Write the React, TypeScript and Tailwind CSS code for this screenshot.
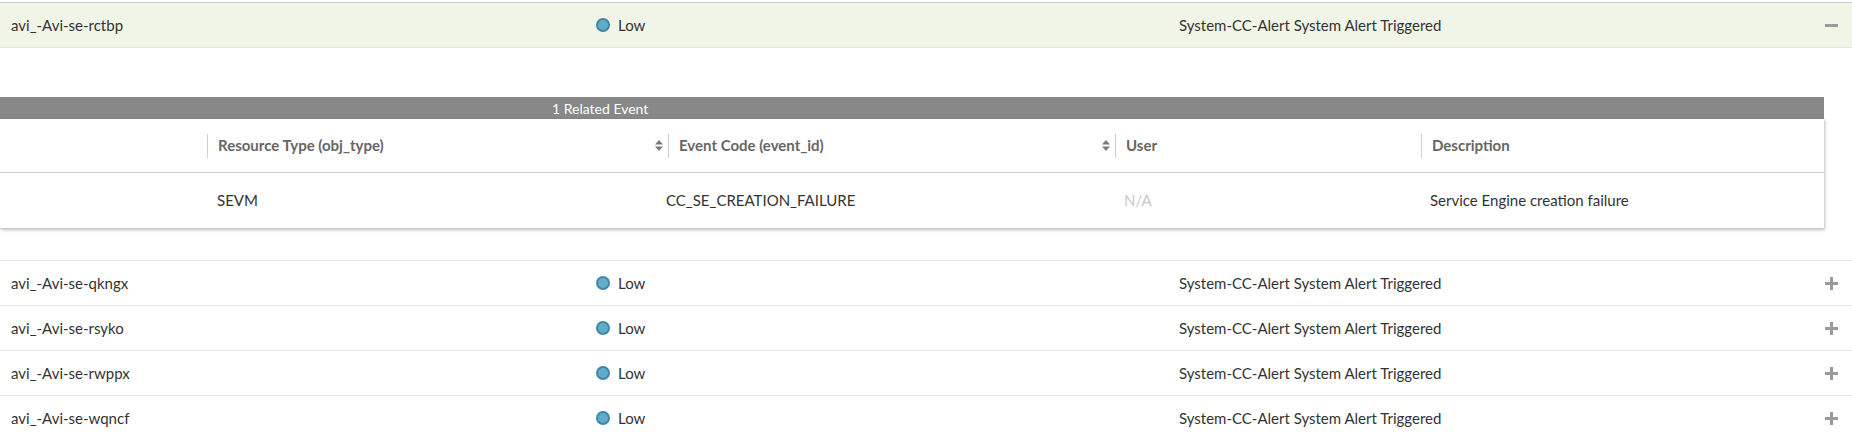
import React from 'react';

const rows = [
  { name: 'avi_-Avi-se-qkngx' },
  { name: 'avi_-Avi-se-rsyko' },
  { name: 'avi_-Avi-se-rwppx' },
  { name: 'avi_-Avi-se-wqncf' },
];

function SortIcon() {
  return (
    <svg width="8" height="11" viewBox="0 0 8 11" className="shrink-0">
      <path d="M4 0 L8 4.5 L0 4.5 Z" fill="#7a7a7a" />
      <path d="M0 6.5 L8 6.5 L4 11 Z" fill="#7a7a7a" />
    </svg>
  );
}

function ToggleIcon({ open }: { open?: boolean }) {
  return (
    <svg width="13" height="13" viewBox="0 0 13 13">
      <rect x="0" y="5" width="13" height="3" fill="#9a9a9a" />
      {!open && <rect x="5" y="0" width="3" height="13" fill="#9a9a9a" />}
    </svg>
  );
}

function Severity() {
  return (
    <div className="flex items-center gap-[8px]">
      <span className="w-[14px] h-[14px] rounded-full bg-[#62abc9] border-2 border-[#3f87a6]" />
      <span>Low</span>
    </div>
  );
}

function AlertRow({ name, expanded }: { name: string; expanded?: boolean }) {
  return (
    <div
      className={`flex items-center h-[45px] border-b border-[#e6e6e6] ${
        expanded ? 'h-[46px] bg-[#f1f5e8] border-t border-t-[#cccccc]' : 'bg-white'
      }`}
    >
      <div className="w-[596px] pl-[11px]">{name}</div>
      <div className="w-[583px]">
        <Severity />
      </div>
      <div className="flex-1">System-CC-Alert System Alert Triggered</div>
      <div className="w-[13px] mr-[14px] flex items-center">
        <ToggleIcon open={expanded} />
      </div>
    </div>
  );
}

function HeaderCell({ label, sortable }: { label: string; sortable?: boolean }) {
  return (
    <div className="flex items-center h-full">
      <div className="w-px h-[24px] bg-[#cfcfcf]" />
      <div className="flex-1 pl-[10px] font-bold text-[#666]">{label}</div>
      {sortable && (
        <div className="pr-[5px]">
          <SortIcon />
        </div>
      )}
    </div>
  );
}

export default function App() {
  return (
    <div className="w-[1852px] h-[437px] overflow-hidden bg-white text-[15px] text-[#333] font-['Lato',sans-serif] pt-[2px]">
      <AlertRow name="avi_-Avi-se-rctbp" expanded />

      {/* expanded details */}
      <div className="pt-[49px] pb-[31px] pr-[28px]">
        <div className="h-[22px] bg-[#888888] text-white text-[14px] flex items-center pl-[552px]">
          1 Related Event
        </div>
        <div className="bg-white shadow-[1px_1px_3px_rgba(0,0,0,0.25)] border-b border-[#cccccc]">
          <div className="grid grid-cols-[207px_461px_447px_306px_1fr] h-[54px] border-b border-[#cccccc]">
            <div />
            <HeaderCell label="Resource Type (obj_type)" sortable />
            <HeaderCell label="Event Code (event_id)" sortable />
            <HeaderCell label="User" />
            <HeaderCell label="Description" />
          </div>
          <div className="grid grid-cols-[207px_449px_458px_306px_1fr] h-[55px] items-center">
            <div />
            <div className="pl-[10px]">SEVM</div>
            <div className="pl-[10px]">CC_SE_CREATION_FAILURE</div>
            <div className="pl-[10px] text-[#c8c8c8]">N/A</div>
            <div className="pl-[10px]">Service Engine creation failure</div>
          </div>
        </div>
      </div>

      <div className="border-t border-[#e6e6e6]">
        {rows.map((r) => (
          <AlertRow key={r.name} name={r.name} />
        ))}
      </div>
    </div>
  );
}
